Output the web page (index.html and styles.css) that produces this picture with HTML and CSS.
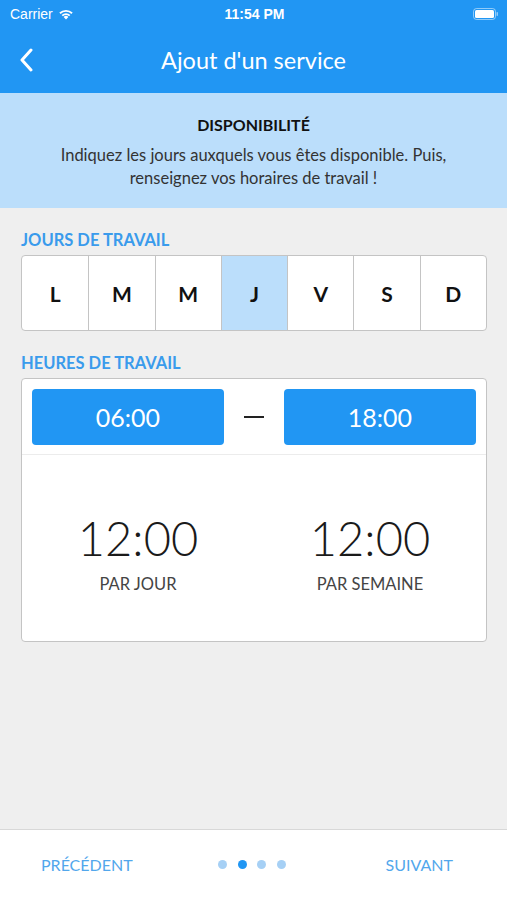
FILE: index.html
```html
<!DOCTYPE html>
<html lang="fr">
<head>
    <meta charset="UTF-8">
    <meta name="viewport" content="width=device-width, initial-scale=1.0">
    <title>Ajout d'un service</title>
    <link rel="stylesheet" href="styles.css">
</head>
<body>
    <div class="screen">
        <header class="topbar">
            <div class="status">
                <div class="status-left">
                    <span>Carrier</span>
                    <svg class="wifi" width="16" height="12" viewBox="0 0 16 12">
                        <path d="M8 11.5 L5.6 8.9 A3.6 3.6 0 0 1 10.4 8.9 Z" fill="#fff"/>
                        <path d="M3.6 6.9 A6.4 6.4 0 0 1 12.4 6.9 L11.1 8.3 A4.6 4.6 0 0 0 4.9 8.3 Z" fill="#fff"/>
                        <path d="M1.3 4.6 A9.6 9.6 0 0 1 14.7 4.6 L13.4 6 A7.8 7.8 0 0 0 2.6 6 Z" fill="#fff"/>
                    </svg>
                </div>
                <div class="status-time">11:54 PM</div>
                <div class="status-right">
                    <svg width="26" height="12" viewBox="0 0 26 12">
                        <rect x="0.5" y="0.5" width="22" height="11" rx="3" fill="none" stroke="rgba(255,255,255,0.5)"/>
                        <rect x="2" y="2" width="19" height="8" rx="1.5" fill="#fff"/>
                        <rect x="23.5" y="4" width="1.5" height="4" rx="0.7" fill="rgba(255,255,255,0.5)"/>
                    </svg>
                </div>
            </div>
            <nav class="navbar">
                <svg class="back" width="14" height="24" viewBox="0 0 14 24">
                    <path d="M11 2 L2 12 L11 22" fill="none" stroke="#fff" stroke-width="3" stroke-linecap="round" stroke-linejoin="round"/>
                </svg>
                <h1>Ajout d'un service</h1>
            </nav>
        </header>

        <section class="intro">
            <h2>DISPONIBILITÉ</h2>
            <p>Indiquez les jours auxquels vous êtes disponible. Puis,<br>renseignez vos horaires de travail !</p>
        </section>

        <main class="content">
            <div class="label">JOURS DE TRAVAIL</div>
            <div class="days">
                <div class="day">L</div>
                <div class="day">M</div>
                <div class="day">M</div>
                <div class="day selected">J</div>
                <div class="day">V</div>
                <div class="day">S</div>
                <div class="day">D</div>
            </div>

            <div class="label">HEURES DE TRAVAIL</div>
            <div class="hours">
                <div class="range">
                    <div class="time-btn">06:00</div>
                    <div class="dash"></div>
                    <div class="time-btn">18:00</div>
                </div>
                <div class="totals">
                    <div class="total">
                        <div class="total-value">12:00</div>
                        <div class="total-label">PAR JOUR</div>
                    </div>
                    <div class="total">
                        <div class="total-value">12:00</div>
                        <div class="total-label">PAR SEMAINE</div>
                    </div>
                </div>
            </div>
        </main>

        <footer class="footer">
            <span class="link">PRÉCÉDENT</span>
            <div class="dots">
                <span class="dot"></span>
                <span class="dot active"></span>
                <span class="dot"></span>
                <span class="dot"></span>
            </div>
            <span class="link">SUIVANT</span>
        </footer>
    </div>
</body>
</html>
```

FILE: styles.css
```css
body {
    margin: 0;
    font-family: Lato, "Open Sans", sans-serif;
    background-color: #efefef;
}
.screen {
    height: 900px;
    display: flex;
    flex-direction: column;
}
.topbar {
    background: #2196f3;
    color: #fff;
}
.status {
    height: 28px;
    display: flex;
    align-items: center;
    justify-content: space-between;
    padding: 0 8px 0 10px;
    font-family: "Liberation Sans", Arial, sans-serif;
    font-size: 14px;
}
.status-left {
    display: flex;
    align-items: center;
    gap: 5px;
    width: 120px;
}
.status-time {
    font-weight: bold;
}
.status-right {
    width: 120px;
    display: flex;
    justify-content: flex-end;
}
.navbar {
    height: 65px;
    display: flex;
    align-items: center;
    justify-content: center;
    position: relative;
}
.back {
    position: absolute;
    left: 20px;
    top: 20px;
}
.navbar h1 {
    margin: 0;
    font-size: 23.5px;
    font-weight: normal;
    padding-bottom: 2px;
}
.intro {
    background: #bbdefb;
    text-align: center;
    padding: 22px 20px 18px;
}
.intro h2 {
    margin: 0 0 10px;
    font-size: 16px;
    font-weight: bold;
    color: #111;
}
.intro p {
    margin: 0;
    font-size: 16.5px;
    line-height: 23px;
    color: #333;
}
.content {
    flex: 1;
    padding: 22px 20px 0 21px;
}
.label {
    color: #3a9bec;
    font-size: 16.5px;
    font-weight: bold;
    margin-bottom: 5px;
}
.days {
    display: grid;
    grid-template-columns: repeat(7, 1fr);
    height: 74px;
    border: 1px solid #c4c4c4;
    border-radius: 4px;
    overflow: hidden;
    background: #fff;
    margin-bottom: 22px;
}
.day {
    display: flex;
    align-items: center;
    justify-content: center;
    font-size: 21px;
    font-weight: bold;
    color: #111;
    border-left: 1px solid #c4c4c4;
}
.day:first-child {
    border-left: none;
}
.day.selected {
    background: #bbdefb;
}
.hours {
    background: #fff;
    border: 1px solid #c4c4c4;
    border-radius: 4px;
    height: 262px;
    display: flex;
    flex-direction: column;
}
.range {
    display: flex;
    align-items: center;
    padding: 10px 10px 9px;
    border-bottom: 1px solid #ececec;
}
.time-btn {
    flex: 1;
    height: 56px;
    background: #2196f3;
    color: #fff;
    border-radius: 4px;
    display: flex;
    align-items: center;
    justify-content: center;
    font-size: 25px;
}
.dash {
    width: 20px;
    height: 2px;
    background: #222;
    margin: 0 20px;
}
.totals {
    flex: 1;
    display: grid;
    grid-template-columns: 1fr 1fr;
    align-items: center;
    text-align: center;
    padding: 7px 0 0;
}
.total-value {
    font-size: 47px;
    font-weight: 300;
    color: #1a1a1a;
    line-height: 56px;
}
.total-label {
    font-size: 16.5px;
    color: #444;
    margin-top: 8px;
}
.footer {
    height: 68px;
    background: #fff;
    border-top: 1px solid #d8d8d8;
    display: flex;
    align-items: center;
    justify-content: space-between;
    padding: 0 54px 2px 41px;
}
.link {
    color: #52a7ec;
    font-size: 16px;
}
.dots {
    display: flex;
    gap: 10.5px;
    margin-right: 14px;
}
.dot {
    width: 9px;
    height: 9px;
    border-radius: 50%;
    background: #a6d0f5;
}
.dot.active {
    background: #2196f3;
}
```
